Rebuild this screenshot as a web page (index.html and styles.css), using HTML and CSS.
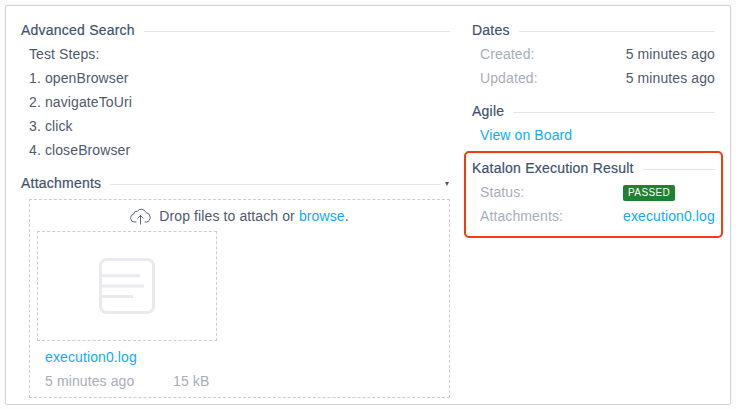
FILE: index.html
```html
<!DOCTYPE html>
<html lang="en">
<head>
    <meta charset="UTF-8">
    <title>Katalon Execution Result</title>
    <link rel="stylesheet" href="styles.css">
</head>
<body>
    <div class="card">
        <div class="main-col">
            <section class="section">
                <h2 class="section-title"><span>Advanced Search</span></h2>
                <div class="section-body">
                    <p class="line">Test Steps:</p>
                    <p class="line">1. openBrowser</p>
                    <p class="line">2. navigateToUri</p>
                    <p class="line">3. click</p>
                    <p class="line">4. closeBrowser</p>
                </div>
            </section>

            <section class="section">
                <h2 class="section-title has-caret"><span>Attachments</span><i class="caret"></i></h2>
                <div class="dropzone">
                    <div class="drop-text">
                        <svg class="cloud" width="22" height="18" viewBox="0 0 22 18" fill="none" stroke="#4f5a6c" stroke-width="0.9">
                            <path d="M6.5 15H4.6a4 4 0 0 1-.9-7.9A3 3 0 0 1 7.2 4.4 5 5 0 0 1 16 5.6a4.8 4.8 0 0 1 .6 9.4h-2.1"/>
                            <path d="M10.5 17.5V8.5M7.6 11.4l2.9-2.9 2.9 2.9"/>
                        </svg>
                        <span>Drop files to attach or <a class="link" href="#">browse</a>.</span>
                    </div>
                    <div class="thumb">
                        <svg width="58" height="58" viewBox="0 0 58 58" fill="none" stroke="#e9eaef" stroke-width="3">
                            <rect x="2.5" y="2.5" width="53" height="53" rx="6"/>
                            <path d="M3 18.7H42M3 29H46M3 39.5H35"/>
                        </svg>
                    </div>
                    <div class="file-info">
                        <p class="line"><a class="link" href="#">execution0.log</a></p>
                        <p class="line file-meta"><span class="file-date">5 minutes ago</span><span>15 kB</span></p>
                    </div>
                </div>
            </section>
        </div>

        <div class="side-col">
            <section class="section">
                <h2 class="section-title"><span>Dates</span></h2>
                <div class="section-body">
                    <div class="row"><span class="label">Created:</span><span>5 minutes ago</span></div>
                    <div class="row"><span class="label">Updated:</span><span>5 minutes ago</span></div>
                </div>
            </section>

            <section class="section">
                <h2 class="section-title"><span>Agile</span></h2>
                <div class="section-body">
                    <p class="line"><a class="link" href="#">View on Board</a></p>
                </div>
            </section>

            <section class="section katalon">
                <h2 class="section-title"><span>Katalon Execution Result</span></h2>
                <div class="section-body">
                    <div class="row"><span class="label">Status:</span><span class="value-col"><span class="badge">PASSED</span></span></div>
                    <div class="row"><span class="label">Attachments:</span><a class="link value-col" href="#">execution0.log</a></div>
                </div>
            </section>
        </div>
    </div>
</body>
</html>
```

FILE: styles.css
```css
/* General Styles */
body {
    margin: 0;
    background: #fdfdfd;
    font-family: "Liberation Sans", Arial, sans-serif;
    font-size: 14px;
    letter-spacing: 0.11px;
    color: #4f5a6c;
}

p {
    margin: 0;
}

.link {
    color: #12aaff;
    text-decoration: none;
}

/* Card */
.card {
    display: flex;
    gap: 22px;
    box-sizing: border-box;
    width: 726px;
    height: 400px;
    margin: 5px 0 0 5px;
    padding: 12px 15px 6px 15px;
    background: white;
    border: 1px solid #d4d4d4;
    border-radius: 2px;
    box-shadow: 0 0 2px rgba(0, 0, 0, 0.12);
}

.main-col {
    width: 429px;
}

.side-col {
    width: 243px;
}

/* Sections */
.section {
    margin-bottom: 9px;
}

.section-title {
    display: flex;
    align-items: center;
    gap: 9px;
    height: 24px;
    margin: 0;
    font-size: 14px;
    font-weight: normal;
    letter-spacing: 0.22px;
    color: #42526e;
    -webkit-text-stroke: 0.2px #42526e;
}

.section-title::after {
    content: "";
    flex: 1;
    height: 1px;
    margin-top: 2px;
    background: #e4e6ea;
}

.has-caret {
    margin-right: 9px;
    position: relative;
}

.caret {
    position: absolute;
    right: -8px;
    top: 11px;
    border-top: 4px solid #555;
    border-left: 2.5px solid transparent;
    border-right: 2.5px solid transparent;
}

.section-body {
    padding-left: 8px;
}

.line {
    height: 24px;
    line-height: 24px;
}

.row {
    display: flex;
    justify-content: space-between;
    height: 24px;
    line-height: 24px;
}

.label {
    color: #a8aeb9;
}

.value-col {
    width: 92px;
}

/* Badge */
.badge {
    display: inline-block;
    height: 16px;
    padding: 0 5px;
    line-height: 16px;
    font-size: 10px;
    letter-spacing: 0.4px;
    color: white;
    background: #1f8232;
    border-radius: 2px;
    vertical-align: 1px;
}

/* Red highlight round the Katalon section */
.katalon {
    position: relative;
}

.katalon::before {
    content: "";
    position: absolute;
    left: -8px;
    right: -8px;
    top: -5px;
    bottom: -10px;
    border: 2px solid #f23c0c;
    border-radius: 5px;
}

/* Attachments */
.dropzone {
    box-sizing: border-box;
    height: 199px;
    margin: 4px 0 0 8px;
    padding: 4px 7px;
    border: 1px dashed #cdcdcd;
}

.drop-text {
    display: flex;
    align-items: center;
    justify-content: center;
    gap: 7px;
    height: 24px;
}

.cloud {
    flex: none;
}

.thumb {
    display: flex;
    align-items: center;
    justify-content: center;
    box-sizing: border-box;
    width: 180px;
    height: 110px;
    margin-top: 3px;
    border: 1px dashed #cdcdcd;
}

.file-info {
    padding: 4px 8px 0;
}

.file-meta {
    color: #a8aeb9;
}

.file-date {
    display: inline-block;
    width: 128px;
}
```
